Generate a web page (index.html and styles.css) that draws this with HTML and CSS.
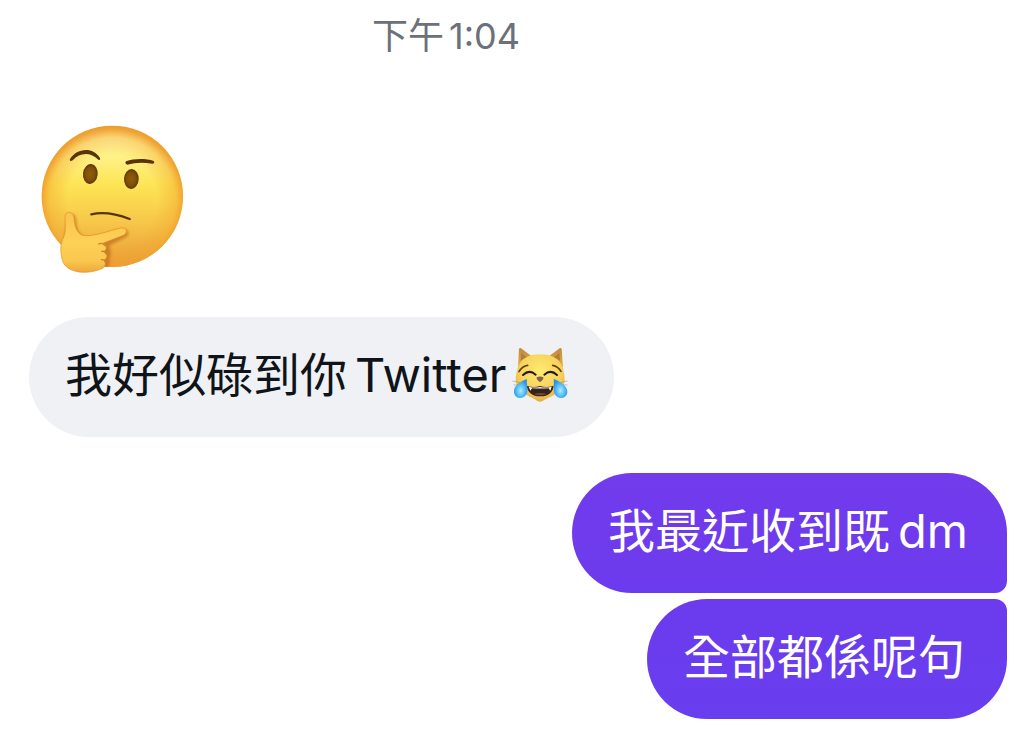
FILE: index.html
```html
<!DOCTYPE html>
<html lang="zh-HK">
<head>
<meta charset="utf-8">
<meta name="viewport" content="width=device-width, initial-scale=1">
<title>Chat</title>
<link rel="stylesheet" href="styles.css">
</head>
<body>
<main class="chat">
  <time class="stamp" datetime="13:04">下午<span class="latin">1:04</span></time>
  <svg class="thinking" viewBox="60 45 432 444" role="img" aria-label="Thinking face">
    <defs>
      <linearGradient id="face" x1="0" y1="0" x2="0" y2="1">
        <stop offset="0" stop-color="#fff9bc"/><stop offset=".2" stop-color="#fff38c"/>
        <stop offset=".42" stop-color="#fde455"/><stop offset=".7" stop-color="#f6c548"/>
        <stop offset="1" stop-color="#e89a38"/>
      </linearGradient>
      <radialGradient id="rim" cx=".5" cy=".53" r=".53">
        <stop offset=".6" stop-color="#f2a32c" stop-opacity="0"/>
        <stop offset=".84" stop-color="#f2a42c" stop-opacity=".4"/>
        <stop offset=".95" stop-color="#ef9d2c" stop-opacity=".9"/>
        <stop offset="1" stop-color="#ea9a2e"/>
      </radialGradient>
      <linearGradient id="hand" x1="0" y1="0" x2="0" y2="1">
        <stop offset="0" stop-color="#f9c54c"/><stop offset=".5" stop-color="#fdd056"/>
        <stop offset=".8" stop-color="#fac84e"/><stop offset="1" stop-color="#efa83b"/>
      </linearGradient>
      <radialGradient id="eye"><stop offset="0" stop-color="#8f5b0d"/><stop offset=".65" stop-color="#805009"/><stop offset="1" stop-color="#5b3609"/></radialGradient>
      <filter id="soft" x="-20%" y="-20%" width="140%" height="140%"><feGaussianBlur stdDeviation="5"/></filter>
      <clipPath id="disc"><circle cx="277" cy="259" r="212"/></clipPath>
    </defs>
    <circle cx="277" cy="259" r="212" fill="url(#face)"/>
    <circle cx="277" cy="259" r="212" fill="url(#rim)"/>
    <g clip-path="url(#disc)"><path d="M136 323C136 304 163 302 163 323C165 349 170 368 187 376C220 382 270 361 302 354C321 350 327 370 312 378L262 403C269 416 268 432 263 442C267 456 260 472 249 477C200 500 142 486 128 452C119 430 118 405 128 386Z" transform="translate(5 4)" fill="#b95f16" opacity=".6" filter="url(#soft)"/></g>
    <path d="M149 149C166 117 217 106 240 144Q242 152 235 149C213 127 181 125 158 151Q150 156 149 149Z" fill="#59340b"/>
    <path d="M318 154C342 145 378 145 401 153Q406 161 397 161C370 156 345 157 322 164Q313 161 318 154Z" fill="#59340b"/>
    <ellipse cx="211" cy="192" rx="22" ry="30" fill="url(#eye)" transform="rotate(6 211 192)"/>
    <ellipse cx="334" cy="207" rx="22" ry="30" fill="url(#eye)" transform="rotate(3 334 207)"/>
    <path d="M214 313C250 305 290 312 329 327" fill="none" stroke="#59340b" stroke-width="7" stroke-linecap="round"/>
    <path d="M135 323C133 302 159 302 162 323C164 349 170 368 187 376C220 382 270 361 302 354C321 351 325 369 310 376L248 400C261 405 262 418 252 424C264 431 263 445 252 450C260 459 255 470 248 475C202 496 143 489 129 456C121 434 120 405 128 388C138 370 136 347 135 323Z" fill="url(#hand)" stroke="#dc902b" stroke-width="2"/>
    <path d="M236 402Q246 397 255 407M245 424Q256 422 258 432M244 449Q254 448 256 456" fill="none" stroke="#cf842b" stroke-width="4" stroke-linecap="round"/>
  </svg>
  <div class="bubble received">
    <span class="text">我好似碌到你<span class="latin">Twitter</span></span>
    <svg class="cat" viewBox="36 33 174 168" role="img" aria-label="Cat with tears of joy">
      <defs>
        <radialGradient id="fur" cx=".5" cy=".35" r=".72">
          <stop offset="0" stop-color="#fdea72"/><stop offset=".55" stop-color="#f8d45c"/>
          <stop offset=".82" stop-color="#eab94a"/><stop offset="1" stop-color="#d29a38"/>
        </radialGradient>
        <linearGradient id="ear" x1="0" y1="0" x2="0" y2="1"><stop offset="0" stop-color="#be8a38"/><stop offset="1" stop-color="#e3b048"/></linearGradient>
        <radialGradient id="drop" cx=".5" cy=".6" r=".55"><stop offset="0" stop-color="#a6efff"/><stop offset=".55" stop-color="#58bdf8"/><stop offset="1" stop-color="#2c91e7"/></radialGradient>
      </defs>
      <path d="M54 94L57 40Q58 34 63 37L97 62L145 62L179 37Q184 34 185 40L189 94Z" fill="url(#ear)"/>
      <path d="M62 74L64 50L80 64ZM180 74L178 50L162 64Z" fill="#b57b34"/>
      <path d="M120 55C156 55 180 69 188 94C192 108 194 120 194 134C190 160 168 175 144 186C132 191 128 197 120 197C112 197 109 191 98 186C74 175 51 160 47 134C47 120 49 108 54 94C62 69 84 55 120 55Z" fill="url(#fur)"/>
      <path d="M57 107Q67 90 83 88M158 88Q174 91 183 106" fill="none" stroke="#604014" stroke-width="5" stroke-linecap="round"/>
      <path d="M69 117Q88 99 107 116M133 116Q152 99 171 117" fill="none" stroke="#28190c" stroke-width="6" stroke-linecap="round"/>
      <path d="M109 125Q120 118 131 125Q129 133 120 139Q111 133 109 125Z" fill="#84604c"/>
      <path d="M80 149Q101 156 120 150Q140 156 161 149Q158 180 121 181Q84 180 80 149Z" fill="#38231c"/>
      <path d="M86 152Q104 157 120 153Q136 157 155 152L151 164L146 157Q121 158 96 157L91 164Z" fill="#fff9ed"/>
      <path d="M101 174Q120 168 140 174Q121 182 101 174Z" fill="#6b483e"/>
      <path d="M37 135L60 140M41 147L60 146M203 135L180 140M202 147L179 146" stroke="#856b55" stroke-opacity=".6" stroke-width="2"/>
      <path d="M81 129C60 137 40 149 42 169C44 190 73 193 81 172C85 160 79 146 81 129Z" fill="url(#drop)"/>
      <path d="M161 128C181 137 204 149 202 169C200 190 171 193 163 172C159 159 163 146 161 128Z" fill="url(#drop)"/>
    </svg>
  </div>
  <div class="sent-group">
    <div class="bubble sent first"><span class="text">我最近收到既<span class="latin">dm</span></span></div>
    <div class="bubble sent last"><span class="text">全部都係呢句</span></div>
  </div>
</main>
</body>
</html>
```
FILE: styles.css
```css
* { box-sizing: border-box; }
body {
  margin: 0;
  background: #fff;
  color: #0f1419;
  font-family: Inter, "Noto Sans CJK TC", sans-serif;
}
.chat {
  display: flex;
  flex-direction: column;
  align-items: flex-start;
  padding: 16px 24px 19px 29px;
}
.stamp {
  align-self: stretch;
  padding-right: 144px;
  text-align: center;
  font-size: 36px;
  line-height: 40px;
  color: #6b707a;
}
.latin { margin-left: 8px; }
.stamp .latin { margin-left: 5px; }
.thinking {
  width: 144px;
  height: 148px;
  margin: 69px 0 44px 11px;
}
.bubble {
  display: flex;
  align-items: center;
  padding: 28px 36px 32px;
  border-radius: 60px;
  font-size: 47px;
  line-height: 60px;
  white-space: nowrap;
}
.received { background: #eff1f5; padding-right: 44px; }
.cat { width: 58px; height: 56px; margin-left: 5px; }
.sent-group {
  align-self: stretch;
  display: flex;
  flex-direction: column;
  align-items: flex-end;
  gap: 6px;
  margin-top: 36px;
}
.sent { color: #fff; }
.first {
  padding-right: 39px;
  border-bottom-right-radius: 12px;
  background: linear-gradient(#723bec, #6c3bed);
}
.last {
  padding-right: 42px;
  border-top-right-radius: 12px;
  background: linear-gradient(#6b3bed, #693eef);
}
```
